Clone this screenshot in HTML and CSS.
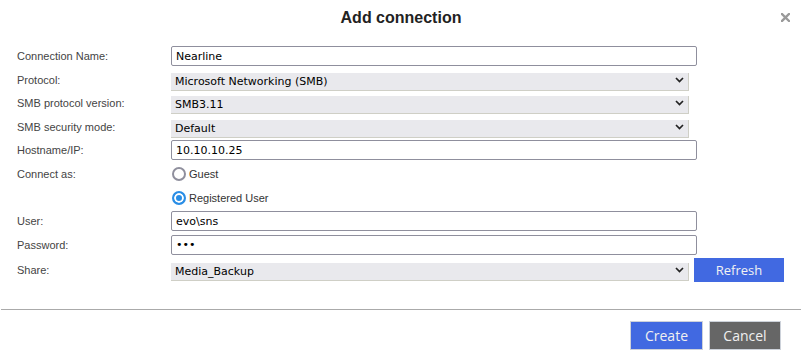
FILE: index.html
```html
<!DOCTYPE html>
<html lang="en">
<head>
  <meta charset="UTF-8">
  <meta name="viewport" content="width=device-width, initial-scale=1.0">
  <title>Add connection</title>
  <link rel="stylesheet" href="styles.css">
</head>
<body>
<div class="dialog">
  <div class="dialog-header">
    <h2>Add connection</h2>
    <button class="close" title="Close">
      <svg width="9" height="9" viewBox="0 0 9 9"><path d="M1 1L8 8M8 1L1 8" stroke="#9a9a9a" stroke-width="2.4" stroke-linecap="square"/></svg>
    </button>
  </div>

  <form class="dialog-body">
    <div class="row">
      <label>Connection Name:</label>
      <input class="field" type="text" value="Nearline">
    </div>
    <div class="row">
      <label>Protocol:</label>
      <div class="select-wrap">
        <select class="dropdown"><option>Microsoft Networking (SMB)</option></select>
        <svg class="chevron" width="9" height="6" viewBox="0 0 9 6"><path d="M1 1L4.5 4.5L8 1" fill="none" stroke="#222" stroke-width="1.7"/></svg>
      </div>
    </div>
    <div class="row">
      <label>SMB protocol version:</label>
      <div class="select-wrap">
        <select class="dropdown"><option>SMB3.11</option></select>
        <svg class="chevron" width="9" height="6" viewBox="0 0 9 6"><path d="M1 1L4.5 4.5L8 1" fill="none" stroke="#222" stroke-width="1.7"/></svg>
      </div>
    </div>
    <div class="row">
      <label>SMB security mode:</label>
      <div class="select-wrap">
        <select class="dropdown"><option>Default</option></select>
        <svg class="chevron" width="9" height="6" viewBox="0 0 9 6"><path d="M1 1L4.5 4.5L8 1" fill="none" stroke="#222" stroke-width="1.7"/></svg>
      </div>
    </div>
    <div class="row">
      <label>Hostname/IP:</label>
      <input class="field" type="text" value="10.10.10.25">
    </div>
    <div class="row">
      <label>Connect as:</label>
      <label class="radio"><input type="radio" name="as"> Guest</label>
    </div>
    <div class="row">
      <label></label>
      <label class="radio"><input type="radio" name="as" checked> Registered User</label>
    </div>
    <div class="row">
      <label>User:</label>
      <input class="field" type="text" value="evo\sns">
    </div>
    <div class="row">
      <label>Password:</label>
      <input class="field" type="password" value="abc">
    </div>
    <div class="row share-row">
      <label>Share:</label>
      <div class="select-wrap">
        <select class="dropdown"><option>Media_Backup</option></select>
        <svg class="chevron" width="9" height="6" viewBox="0 0 9 6"><path d="M1 1L4.5 4.5L8 1" fill="none" stroke="#222" stroke-width="1.7"/></svg>
      </div>
      <button type="button" class="refresh">Refresh</button>
    </div>
  </form>

  <div class="dialog-footer">
    <button class="btn primary">Create</button>
    <button class="btn dark">Cancel</button>
  </div>
</div>
</body>
</html>
```

FILE: styles.css
```css
body { margin: 0; background: #fff; font-family: "Liberation Sans", Arial, sans-serif; }
.dialog { width: 802px; }

.dialog-header { position: relative; height: 36px; }
.dialog-header h2 { margin: 0; text-align: center; line-height: 36px; font-size: 16px; font-weight: bold; color: #222; }
.close { position: absolute; top: 13px; right: 12px; padding: 0; border: none; background: none; width: 9px; height: 9px; cursor: pointer; }
.close svg { display: block; }

.dialog-body { display: flex; flex-direction: column; gap: 3.6px; box-sizing: border-box; height: 273px; padding: 10px 0 0 17px; }
.row { display: flex; align-items: center; height: 20px; flex: none; }
.row > label:first-child { width: 154px; flex: none; font-size: 11px; color: #444; }
.share-row { height: 24px; }

.field {
  box-sizing: border-box;
  width: 526px;
  height: 20px;
  padding: 0 4px;
  border: 1px solid #8f8f9d;
  border-radius: 2px;
  font-family: "DejaVu Sans", Verdana, sans-serif;
  font-size: 11px;
  color: #000;
  background: #fff;
}
input[type="password"].field { font-size: 11px; }

.select-wrap { position: relative; width: 518px; height: 18px; }
.dropdown {
  appearance: none;
  box-sizing: border-box;
  width: 100%;
  height: 18px;
  padding: 0 4px;
  border: none;
  border-right: 1px solid #cfcfc6;
  border-bottom: 1px solid #cfcfc6;
  border-radius: 0;
  background: #e9e9ed;
  font-family: "DejaVu Sans", Verdana, sans-serif;
  font-size: 11px;
  color: #000;
}
.chevron { position: absolute; right: 5px; top: 6px; pointer-events: none; }

.radio { display: flex; align-items: center; gap: 3px; font-size: 11px; color: #333; }
.radio input {
  appearance: none;
  box-sizing: border-box;
  width: 14px;
  height: 14px;
  margin: 0 0 0 1px;
  border: 2px solid #8f8f9d;
  border-radius: 50%;
  background: #fff;
}
.radio input:checked { border-color: #2a8ee6; background: #2a8ee6; box-shadow: inset 0 0 0 2px #fff; }

.refresh {
  margin-left: 5px;
  width: 90px;
  height: 24px;
  border: none;
  background: #4169e1;
  color: #f2f2f2;
  font-family: "Open Sans", sans-serif;
  font-size: 13px;
}

.dialog-footer { display: flex; justify-content: flex-end; gap: 6px; margin: 0 1px; padding: 11px 20px 0 0; border-top: 1px solid #aaa; }
.btn {
  height: 29px;
  padding: 0;
  border: 1px solid #cdd2da;
  font-family: "Open Sans", sans-serif;
  font-size: 14px;
  color: #f0f0f0;
  cursor: pointer;
}
.primary { width: 73px; margin-left: 1px; background: #4169e1; }
.dark { width: 72px; background: #666; }
```
